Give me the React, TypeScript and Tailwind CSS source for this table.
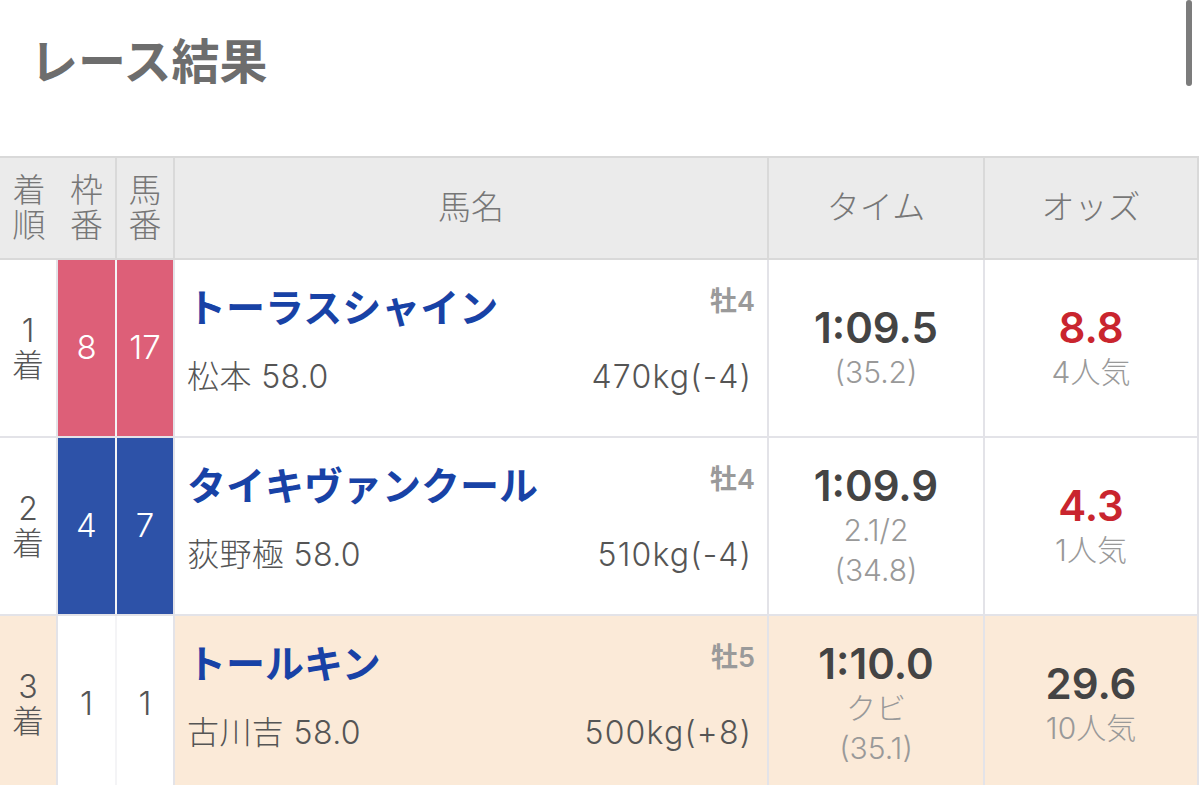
import React from 'react';

type Result = {
  rank: number;
  waku: number;
  umaban: number;
  frame: 'pink' | 'blue' | 'white';
  name: string;
  sexAge: string;
  jockey: string;
  weight: string;
  time: string;
  margin?: string;
  last3f: string;
  odds: string;
  pop: string;
  favourite: boolean;
  placed: boolean;
};

const results: Result[] = [
  {
    rank: 1,
    waku: 8,
    umaban: 17,
    frame: 'pink',
    name: 'トーラスシャイン',
    sexAge: '牡4',
    jockey: '松本 58.0',
    weight: '470kg(-4)',
    time: '1:09.5',
    last3f: '(35.2)',
    odds: '8.8',
    pop: '4人気',
    favourite: true,
    placed: false,
  },
  {
    rank: 2,
    waku: 4,
    umaban: 7,
    frame: 'blue',
    name: 'タイキヴァンクール',
    sexAge: '牡4',
    jockey: '荻野極 58.0',
    weight: '510kg(-4)',
    time: '1:09.9',
    margin: '2.1/2',
    last3f: '(34.8)',
    odds: '4.3',
    pop: '1人気',
    favourite: true,
    placed: false,
  },
  {
    rank: 3,
    waku: 1,
    umaban: 1,
    frame: 'white',
    name: 'トールキン',
    sexAge: '牡5',
    jockey: '古川吉 58.0',
    weight: '500kg(+8)',
    time: '1:10.0',
    margin: 'クビ',
    last3f: '(35.1)',
    odds: '29.6',
    pop: '10人気',
    favourite: false,
    placed: true,
  },
];

const frameClass = {
  pink: 'bg-[#dd5f78] text-white',
  blue: 'bg-[#2d52a8] text-white',
  white: 'bg-white text-[#555]',
};

const Stack = ({ text }: { text: string }) => (
  <div className="flex flex-col items-center">
    {text.split('').map((c, i) => (
      <span key={i} className="block h-[35px] leading-[35px]">
        {c}
      </span>
    ))}
  </div>
);

const ResultRow = ({ r }: { r: Result }) => {
  const bg = r.placed ? 'bg-[#fbead8]' : 'bg-white';
  return (
    <div className="flex h-[178px] border-b-2 border-[#e3e3e8]">
      {/* 着順 */}
      <div className={`flex w-[58px] items-center justify-center border-r-2 border-[#e3e3e8] text-[32px] font-light text-[#555] ${bg}`}>
        <div className="flex flex-col items-center">
          <span className="block h-[35px] leading-[35px]">{r.rank}</span>
          <span className="block h-[35px] leading-[35px]">着</span>
        </div>
      </div>
      {/* 枠番 / 馬番 */}
      <div className={`flex w-[59px] items-center justify-center border-r-2 border-[#f4f4f6] text-[33px] font-light ${frameClass[r.frame]}`}>
        {r.waku}
      </div>
      <div className={`flex w-[58px] items-center justify-center border-r-2 border-[#e3e3e8] text-[33px] font-light ${frameClass[r.frame]}`}>
        {r.umaban}
      </div>
      {/* 馬名 */}
      <div className={`flex w-[594px] flex-col border-r-2 border-[#e3e3e8] pl-[12px] pr-[12px] pt-[24px] ${bg}`}>
        <div className="flex items-start justify-between">
          <span className="text-[39px] font-bold leading-[48px] text-[#1842a6]">{r.name}</span>
          <span className="text-[27px] font-semibold leading-[36px] text-[#9a9a9a]">{r.sexAge}</span>
        </div>
        <div className="mt-[25px] flex items-center justify-between pr-[3px] text-[32px] font-light leading-[40px] tracking-[0.4px] text-[#555]">
          <span>{r.jockey}</span>
          <span className="tracking-[1.2px]">{r.weight}</span>
        </div>
      </div>
      {/* タイム */}
      <div className={`flex w-[216px] flex-col items-center justify-center border-r-2 border-[#e3e3e8] ${bg}`}>
        <span className="text-[42px] font-semibold leading-[48px] text-[#444]">{r.time}</span>
        {r.margin && <span className="text-[30px] font-light leading-[40px] text-[#999]">{r.margin}</span>}
        <span className="text-[30px] font-light leading-[40px] text-[#999]">{r.last3f}</span>
      </div>
      {/* オッズ */}
      <div className={`flex w-[214px] flex-col items-center justify-center border-r-2 border-[#e3e3e8] ${bg}`}>
        <span className={`text-[42px] font-semibold leading-[48px] ${r.favourite ? 'text-[#c9252e]' : 'text-[#444]'}`}>{r.odds}</span>
        <span className="text-[30px] font-light leading-[40px] text-[#999]">{r.pop}</span>
      </div>
    </div>
  );
};

export default function App() {
  return (
    <div className="relative h-[785px] w-[1200px] overflow-hidden bg-white font-[family-name:Inter,'Noto_Sans_CJK_JP',sans-serif]">
      {/* scroll indicator */}
      <div className="absolute right-[8px] top-0 h-[86px] w-[6px] rounded-full bg-[#7c7c7c]" />

      <div className="h-[156px] pl-[30px] pt-[38px]">
        <h1 className="text-[48px] font-bold leading-[48px] text-[#6d6d6d]">レース結果</h1>
      </div>

      <div className="w-[1199px] border-t-2 border-[#d9d9d9]">
        <div className="flex h-[102px] border-b-2 border-[#d9d9d9] bg-[#ebebeb] text-[33px] font-light text-[#777]">
          <div className="flex w-[58px] items-center justify-center">
            <Stack text="着順" />
          </div>
          <div className="flex w-[59px] items-center justify-center border-r-2 border-[#d9d9d9]">
            <Stack text="枠番" />
          </div>
          <div className="flex w-[58px] items-center justify-center border-r-2 border-[#d9d9d9]">
            <Stack text="馬番" />
          </div>
          <div className="flex w-[594px] items-center justify-center border-r-2 border-[#d9d9d9]">馬名</div>
          <div className="flex w-[216px] items-center justify-center border-r-2 border-[#d9d9d9]">タイム</div>
          <div className="flex w-[214px] items-center justify-center border-r-2 border-[#d9d9d9]">オッズ</div>
        </div>
        {results.map((r) => (
          <ResultRow key={r.rank} r={r} />
        ))}
      </div>
    </div>
  );
}
